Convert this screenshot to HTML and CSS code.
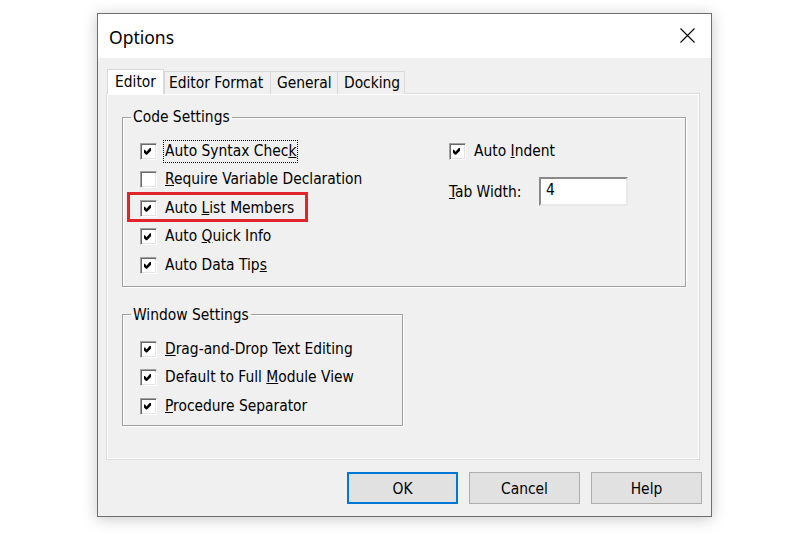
FILE: index.html
```html
<!DOCTYPE html>
<html>
<head>
<meta charset="utf-8">
<link rel="stylesheet" href="styles.css">
</head>
<body>
<div class="dialog">
  <div class="titlebar">
    <span class="title">Options</span>
    <svg class="close" width="15" height="15" viewBox="0 0 15 15"><path d="M0.5 0.5 L14.5 14.5 M14.5 0.5 L0.5 14.5" stroke="#000" stroke-width="1.1" fill="none"/></svg>
  </div>
  <div class="body">
    <div class="tabs">
      <div class="tab active">Editor</div>
      <div class="tab t-format">Editor Format</div>
      <div class="tab t-general">General</div>
      <div class="tab t-docking">Docking</div>
    </div>
    <div class="panel">
      <fieldset class="group code">
        <legend>Code Settings</legend>
        <div class="cols">
          <div class="col">
            <div class="row"><span class="cb on"></span><span class="lbl focus">Auto Syntax Chec<u>k</u></span></div>
            <div class="row"><span class="cb"></span><span class="lbl"><u>R</u>equire Variable Declaration</span></div>
            <div class="row hl"><span class="cb on"></span><span class="lbl">Auto <u>L</u>ist Members</span><span class="redbox"></span></div>
            <div class="row"><span class="cb on"></span><span class="lbl">Auto <u>Q</u>uick Info</span></div>
            <div class="row"><span class="cb on"></span><span class="lbl">Auto Data Tip<u>s</u></span></div>
          </div>
          <div class="col">
            <div class="row"><span class="cb on"></span><span class="lbl">Auto <u>I</u>ndent</span></div>
            <div class="tabrow"><span class="tlbl"><u>T</u>ab Width:</span><span class="input">4</span></div>
          </div>
        </div>
      </fieldset>
      <fieldset class="group window">
        <legend>Window Settings</legend>
        <div class="wrows">
          <div class="row w"><span class="cb on"></span><span class="lbl"><u>D</u>rag-and-Drop Text Editing</span></div>
          <div class="row w"><span class="cb on"></span><span class="lbl">Default to Full <u>M</u>odule View</span></div>
          <div class="row w"><span class="cb on"></span><span class="lbl"><u>P</u>rocedure Separator</span></div>
        </div>
      </fieldset>
    </div>
    <div class="buttons">
      <div class="btn default">OK</div>
      <div class="btn">Cancel</div>
      <div class="btn">Help</div>
    </div>
  </div>
</div>
</body>
</html>
```
FILE: styles.css
```css
html, body {
  margin: 0;
  padding: 0;
  background: #ffffff;
}
body {
  width: 811px;
  height: 536px;
  overflow: hidden;
  font-family: "DejaVu Sans Condensed", "Liberation Sans", sans-serif;
  font-size: 15.4px;
  color: #000;
}
.dialog {
  margin: 13px 0 0 97px;
  width: 613px;
  height: 502px;
  border: 1px solid #6f6f6f;
  box-shadow: 0 2px 14px rgba(0,0,0,0.22);
  background: #f0f0f0;
  display: flex;
  flex-direction: column;
}
.titlebar {
  height: 44px;
  background: #ffffff;
  display: flex;
  align-items: center;
  justify-content: space-between;
  padding: 0 16px 0 11px;
}
.title {
  font-family: "Noto Sans", "Open Sans", sans-serif;
  font-size: 17.5px;
  margin-top: 1px;
}
.close {
  display: block;
  margin-top: -2px;
}
.body {
  flex: 1;
  padding: 11px 9px 0 9px;
  display: flex;
  flex-direction: column;
}
.tabs {
  display: flex;
  align-items: flex-end;
  height: 25px;
  position: relative;
  z-index: 1;
}
.tab {
  height: 22px;
  line-height: 23px;
  border: 1px solid #d9d9d9;
  border-bottom: none;
  background: #f0f0f0;
  padding: 0 5px;
  margin-left: -1px;
  box-sizing: content-box;
}
.tab.active {
  height: 24px;
  line-height: 24px;
  background: #ffffff;
  padding: 0 7px 0 7px;
  margin-left: 0;
  margin-right: 1px;
  border-color: #d9d9d9;
}
.t-format { width: 97px; padding: 0 4px; }
.t-general { width: 54px; padding: 0 6px; }
.t-docking { width: 54px; padding: 0 6px; }
.panel {
  border: 1px solid #ffffff;
  box-shadow: 0 0 0 1px #dcdcdc;
  background: #f0f0f0;
  padding: 13px 12px 0 14px;
  box-sizing: content-box;
  width: 564px;
  height: 350px;
}
.group {
  margin: 0;
  padding: 0;
  border: 1px solid #a0a0a0;
  box-shadow: 1px 1px 0 #ffffff, inset 1px 1px 0 #ffffff;
  min-width: 0;
}
.group legend {
  margin-left: 8px;
  padding: 0 2px;
  line-height: 18px;
  height: 18px;
}
.code {
  width: 562px;
}
.cols {
  display: grid;
  grid-template-columns: 309px 1fr;
  padding: 11px 0 6px 17px;
}
.row {
  display: flex;
  align-items: center;
  height: 28.5px;
  position: relative;
}
.cb {
  width: 15px;
  height: 15px;
  flex: none;
  background: #ffffff;
  border-top: 1px solid #a0a0a0;
  border-left: 1px solid #a0a0a0;
  border-right: 1px solid #ffffff;
  border-bottom: 1px solid #ffffff;
  box-shadow: inset 1px 1px 0 #696969, inset -1px -1px 0 #e3e3e3;
  margin-right: 8px;
  position: relative;
}
.cb.on::after {
  content: "";
  position: absolute;
  left: 3px;
  top: 4px;
  width: 8px;
  height: 8px;
  background: #000;
  clip-path: polygon(0 25%, 12.5% 25%, 31% 50%, 75% 0, 87.5% 0, 87.5% 37.5%, 37.5% 87.5%, 25% 87.5%, 0 62.5%);
}
.lbl {
  line-height: 19px;
  white-space: nowrap;
}
.focus {
  outline: 1px dotted #000;
  outline-offset: 0;
  padding: 1px 1px 1px 1px;
  margin-left: -1px;
}
.redbox {
  position: absolute;
  left: -13px;
  top: -2px;
  width: 175px;
  height: 24px;
  border: 3px solid #e0242b;
}
.tabrow {
  display: flex;
  align-items: center;
  margin-top: 11px;
  height: 30px;
}
.tlbl {
  width: 90px;
  white-space: nowrap;
}
.input {
  width: 80px;
  height: 25px;
  line-height: 22px;
  background: #ffffff;
  border-top: 2px solid #8a8a8a;
  border-left: 2px solid #8a8a8a;
  border-right: 2px solid #e8e8e8;
  border-bottom: 2px solid #e8e8e8;
  padding: 0 0 0 5px;
  box-sizing: content-box;
}
.window {
  width: 279px;
  margin-top: 19px;
}
.wrows {
  padding: 11.25px 0 4.5px 17px;
}
.row.w {
  height: 28.5px;
}
.buttons {
  display: flex;
  justify-content: flex-end;
  gap: 11px;
  margin-top: 13px;
}
.btn {
  width: 109px;
  height: 30px;
  line-height: 32px;
  text-align: center;
  background: #e1e1e1;
  border: 1px solid #adadad;
}
.btn.default {
  width: 107px;
  height: 28px;
  line-height: 30px;
  border: 2px solid #0078d7;
}
```
